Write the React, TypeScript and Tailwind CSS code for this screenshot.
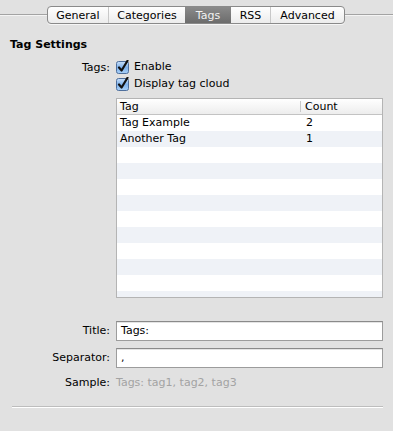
import React from "react";

const tabs = [
  { name: "General", w: "w-[60px]" },
  { name: "Categories", w: "w-[77px]" },
  { name: "Tags", w: "w-[46px]", active: true },
  { name: "RSS", w: "w-[39px]" },
  { name: "Advanced", w: "w-[74px]" },
];

const rows = [
  { tag: "Tag Example", count: "2" },
  { tag: "Another Tag", count: "1" },
];

function Check() {
  return (
    <svg width="14" height="14" viewBox="0 0 14 14" className="shrink-0">
      <defs>
        <linearGradient id="cb" x1="0" y1="0" x2="0" y2="1">
          <stop offset="0" stopColor="#c9e0fa" />
          <stop offset="0.5" stopColor="#7fb2ec" />
          <stop offset="1" stopColor="#a9d0f7" />
        </linearGradient>
      </defs>
      <rect x="0.5" y="1.5" width="12" height="12" rx="2" fill="url(#cb)" stroke="#4f6f9c" />
      <path d="M3 7.5 L5.6 10.5 L11.5 0.8" fill="none" stroke="#111" strokeWidth="2.2" strokeLinecap="round" strokeLinejoin="round" />
    </svg>
  );
}

export default function App() {
  const filler = Array.from({ length: 10 });
  return (
    <div
      className="w-[393px] h-[431px] bg-[#e1e1e1] text-[11px] text-black overflow-hidden"
      style={{ fontFamily: '"DejaVu Sans", "Liberation Sans", sans-serif' }}
    >
      {/* Tab bar */}
      <div className="flex items-center pt-[6px] h-[18px] box-content">
        <div className="w-[47px] h-[2px] border-t border-[#a3a3a3] bg-[#f4f4f4] self-center" />
        <div className="flex h-[18px] rounded-[4px] border border-[#8a8a8a] bg-gradient-to-b from-white to-[#ececec] overflow-hidden shadow-[0_1px_0_#f6f6f6]">
          {tabs.map((t, i) => (
            <div
              key={t.name}
              className={`${t.w} flex items-center justify-center leading-none ${
                t.active
                  ? "bg-gradient-to-b from-[#8a8a8a] to-[#6c6c6c] text-[#f2f2f2]"
                  : ""
              } ${i > 0 && !t.active && !tabs[i - 1].active ? "border-l border-[#c8c8c8]" : ""}`}
            >
              {t.name}
            </div>
          ))}
        </div>
        <div className="flex-1 h-[2px] border-t border-[#a3a3a3] bg-[#f4f4f4] self-center" />
      </div>

      <div className="px-[10px] pt-[14px]">
        <div className="font-bold leading-[13px]">Tag Settings</div>

        <div className="grid grid-cols-[100px_1fr] gap-x-[6px] mt-[9px]">
          <div className="text-right leading-[14px] pt-[1px]">Tags:</div>
          <div className="flex flex-col gap-[3px]">
            <label className="flex items-center gap-[4px] leading-[14px]">
              <Check />
              Enable
            </label>
            <label className="flex items-center gap-[4px] leading-[14px]">
              <Check />
              Display tag cloud
            </label>
          </div>

          {/* Table */}
          <div />
          <div className="mt-[7px] h-[200px] border border-[#b4b4b4] bg-white overflow-hidden">
            <div className="flex h-[16px] bg-gradient-to-b from-white to-[#ededed] border-b border-[#c3c3c3] leading-[15px]">
              <div className="w-[184px] pl-[3px] border-r border-[#c9c9c9] my-[2px] leading-[11px]">Tag</div>
              <div className="flex-1 pl-[4px]">Count</div>
            </div>
            {rows.map((r, i) => (
              <div key={r.tag} className={`flex h-[16px] leading-[16px] ${i % 2 ? "bg-[#eff2f7]" : "bg-white"}`}>
                <div className="w-[185px] pl-[3px]">{r.tag}</div>
                <div className="flex-1 pl-[4px]">{r.count}</div>
              </div>
            ))}
            {filler.map((_, i) => (
              <div key={i} className={`h-[16px] ${i % 2 ? "bg-[#eff2f7]" : "bg-white"}`} />
            ))}
          </div>

          <div className="text-right mt-[23px] leading-[20px]">Title:</div>
          <div className="mt-[23px] h-[20px] border border-[#9c9c9c] border-t-[#8a8a8a] bg-white pl-[4px] leading-[18px] shadow-[inset_0_1px_0_#e4e4e4]">
            Tags:
          </div>

          <div className="text-right mt-[7px] leading-[20px]">Separator:</div>
          <div className="mt-[7px] h-[20px] border border-[#9c9c9c] border-t-[#8a8a8a] bg-white pl-[4px] leading-[18px] shadow-[inset_0_1px_0_#e4e4e4]">
            ,
          </div>

          <div className="text-right mt-[8px] leading-[14px]">Sample:</div>
          <div className="mt-[8px] leading-[14px] text-[#a3a3a3]">Tags: tag1, tag2, tag3</div>
        </div>

        <div className="ml-[2px] mt-[16px] h-[2px] border-t border-[#bdbdbd] bg-white" />
      </div>
    </div>
  );
}
